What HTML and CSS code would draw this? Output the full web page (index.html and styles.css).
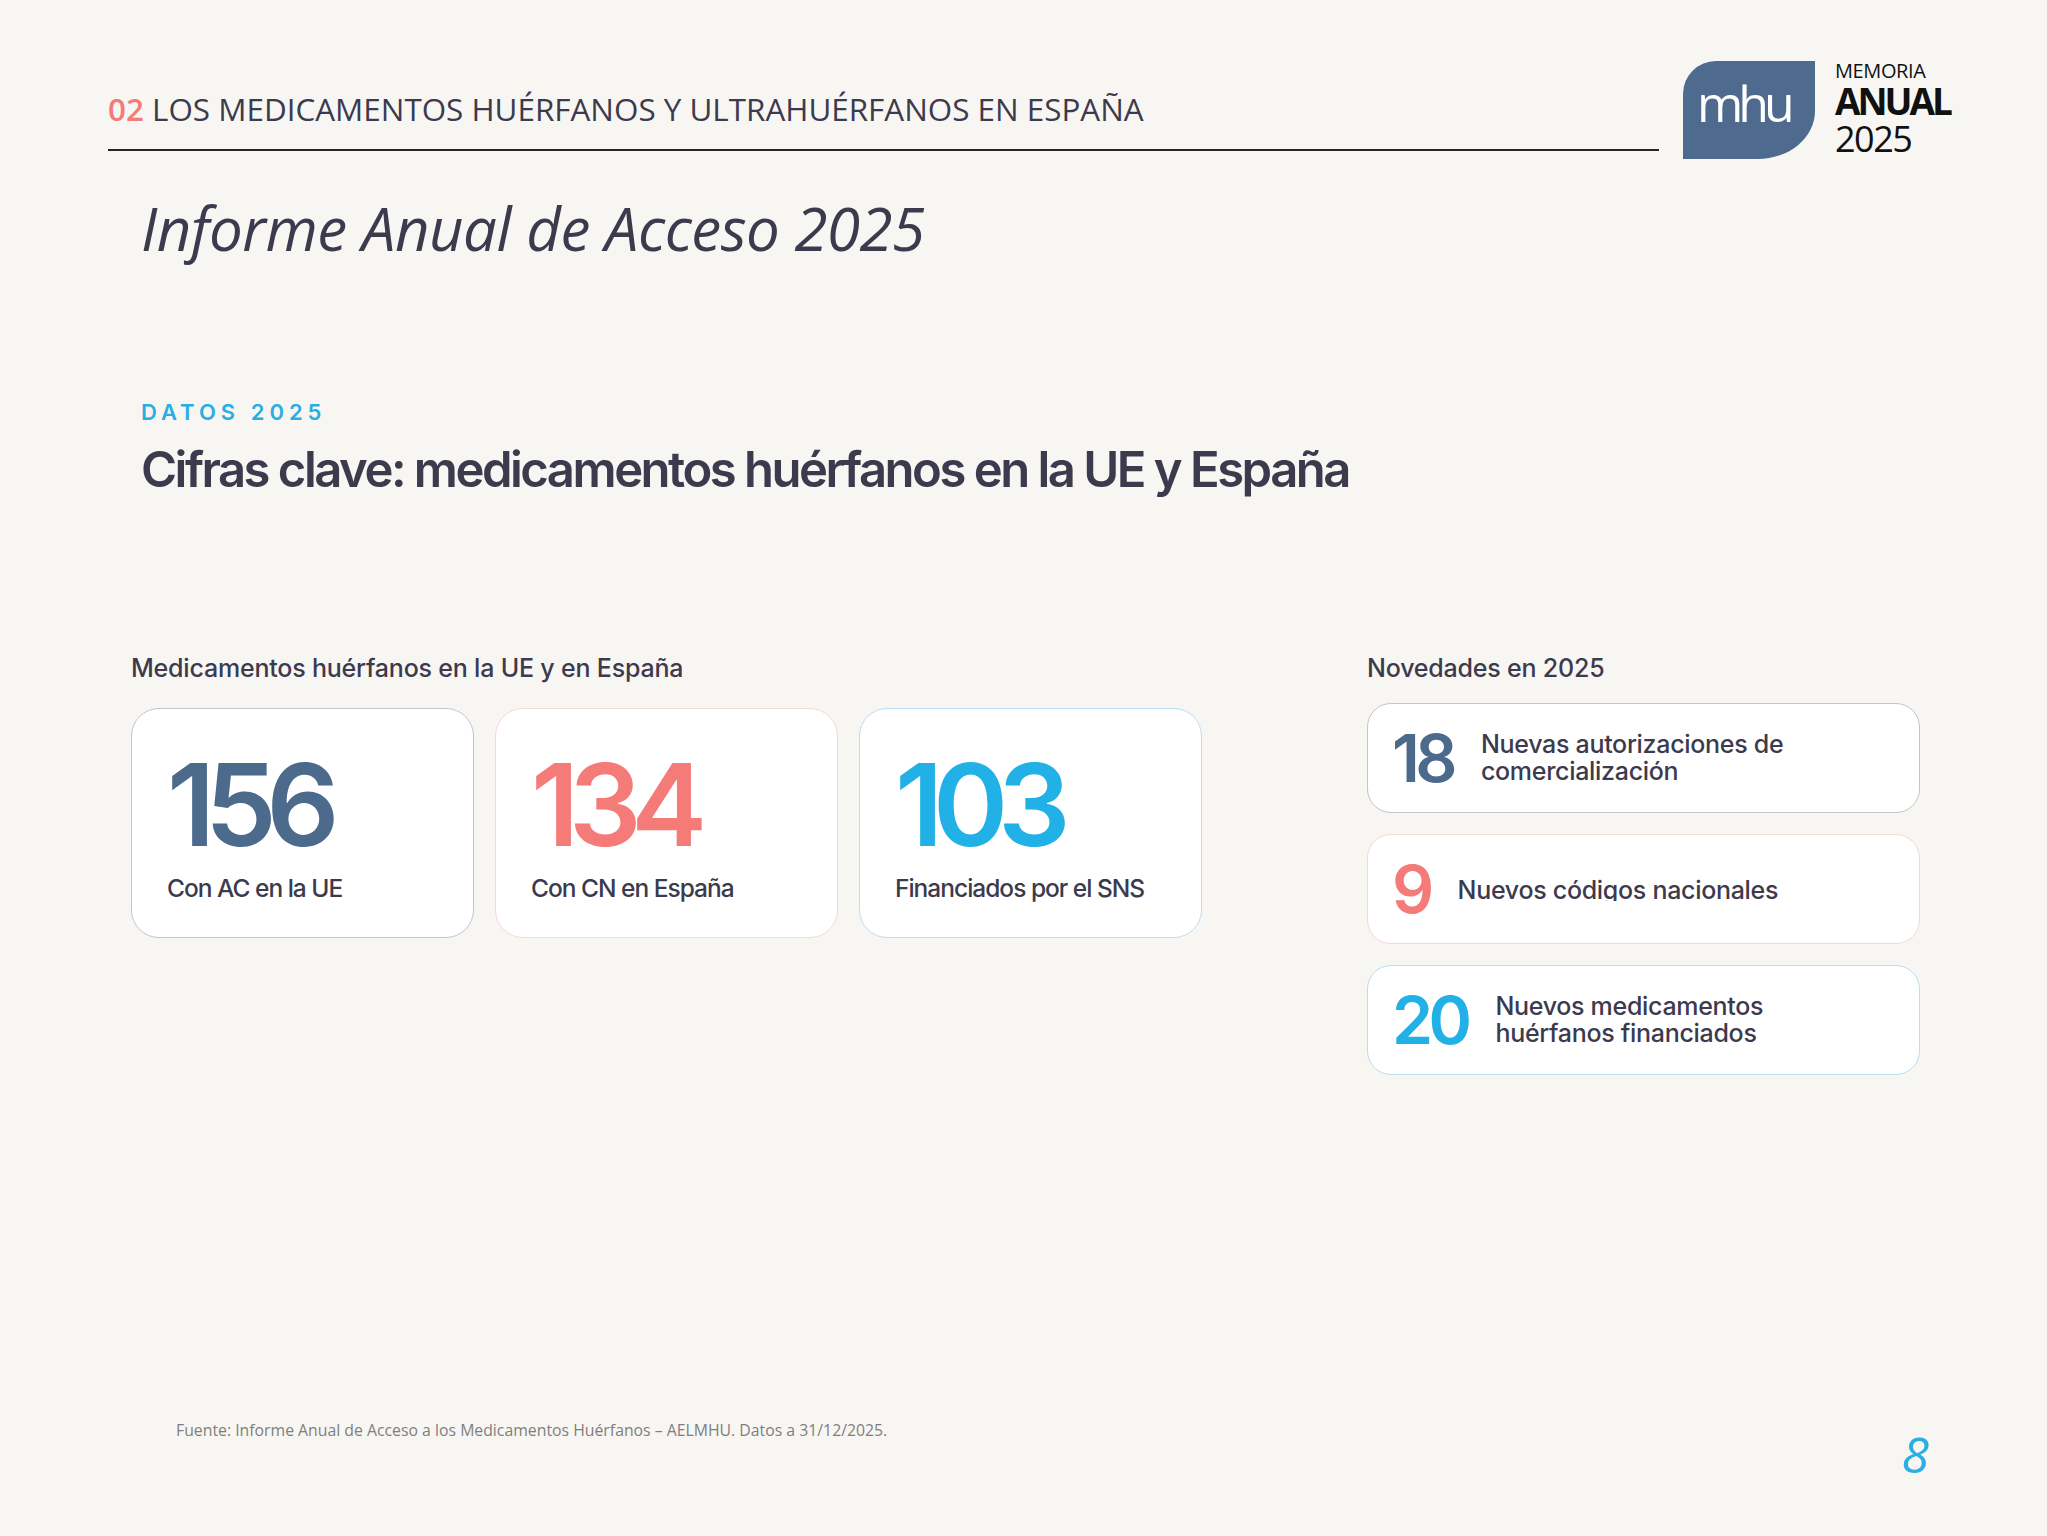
FILE: index.html
```html
<!DOCTYPE html>
<html lang="es">
<head>
<meta charset="utf-8">
<title>Memoria Anual 2025 – Cifras clave</title>
<link rel="stylesheet" href="styles.css">
</head>
<body>
<div class="page">
  <header class="top">
    <div class="top-left">
      <div class="section-title"><span class="num">02</span> LOS MEDICAMENTOS HUÉRFANOS Y ULTRAHUÉRFANOS EN ESPAÑA</div>
      <div class="rule"></div>
    </div>
    <div class="brand">
      <div class="logo-mark"><span>mhu</span></div>
      <div class="brand-text">
        <span class="memoria">MEMORIA</span>
        <span class="anual">ANUAL</span>
        <span class="year">2025</span>
      </div>
    </div>
  </header>

  <h1 class="report-title">Informe Anual de Acceso 2025</h1>

  <section class="intro">
    <div class="eyebrow">DATOS 2025</div>
    <h2 class="headline">Cifras clave: medicamentos huérfanos en la UE y España</h2>
  </section>

  <section class="stats">
    <div class="col-left">
      <h3 class="col-title">Medicamentos huérfanos en la UE y en España</h3>
      <div class="cards">
        <div class="card card-slate">
          <div class="card-num">156</div>
          <div class="card-label">Con AC en la UE</div>
        </div>
        <div class="card card-coral">
          <div class="card-num">134</div>
          <div class="card-label">Con CN en España</div>
        </div>
        <div class="card card-cyan">
          <div class="card-num">103</div>
          <div class="card-label">Financiados por el SNS</div>
        </div>
      </div>
    </div>
    <div class="col-right">
      <h3 class="col-title">Novedades en 2025</h3>
      <div class="rows">
        <div class="row row-slate">
          <div class="row-num">18</div>
          <div class="row-label">Nuevas autorizaciones de<br>comercialización</div>
        </div>
        <div class="row row-coral">
          <div class="row-num">9</div>
          <div class="row-label clip">Nuevos códigos nacionales</div>
        </div>
        <div class="row row-cyan">
          <div class="row-num">20</div>
          <div class="row-label">Nuevos medicamentos<br>huérfanos financiados</div>
        </div>
      </div>
    </div>
  </section>

  <footer class="footer">
    <p class="source">Fuente: Informe Anual de Acceso a los Medicamentos Huérfanos – AELMHU. Datos a 31/12/2025.</p>
    <span class="page-num">8</span>
  </footer>
</div>
</body>
</html>
```

FILE: styles.css
```css
* { box-sizing: border-box; }

html, body {
  margin: 0;
  padding: 0;
}

body {
  background: #f8f6f2;
  font-family: Inter, "Noto Sans", sans-serif;
  color: #3c3a4d;
}

.page {
  min-height: 100vh;
  display: flex;
  flex-direction: column;
}

/* ---------- header ---------- */
.top {
  display: flex;
  align-items: flex-start;
  gap: 24px;
  padding: 61px 0 0 108px;
}

.top-left {
  width: 1551px;
  padding-top: 28px;
}

.section-title {
  font-family: "Open Sans", sans-serif;
  font-size: 31.4px;
  line-height: 40px;
  color: #3c3a4d;
  white-space: nowrap;
}

.section-title .num {
  color: #f47b78;
  font-weight: 600;
}

.rule {
  margin-top: 20px;
  border-top: 2px solid #262626;
}

.brand {
  display: flex;
  align-items: flex-start;
  gap: 20px;
}

.logo-mark {
  width: 132px;
  height: 98px;
  background: #4e6a8e;
  border-radius: 33px 0 57px 0 / 33px 0 48px 0;
  padding: 17px 0 0 14px;
}

.logo-mark span {
  display: block;
  font-family: "Open Sans", sans-serif;
  font-size: 50px;
  line-height: 50px;
  font-weight: 400;
  letter-spacing: -5px;
  color: #ffffff;
}

.brand-text {
  display: flex;
  flex-direction: column;
  font-family: "Open Sans", sans-serif;
  color: #111111;
}

.memoria {
  font-size: 20px;
  line-height: 20px;
  letter-spacing: -0.4px;
}

.anual {
  margin-top: 2px;
  font-size: 37px;
  line-height: 36px;
  font-weight: 700;
  letter-spacing: -3px;
}

.year {
  margin-top: 2px;
  font-size: 36px;
  line-height: 36px;
  letter-spacing: -1.5px;
}

/* ---------- titles ---------- */
.report-title {
  margin: 35px 0 0 141px;
  font-family: "Open Sans", sans-serif;
  font-style: italic;
  font-weight: 400;
  font-size: 60px;
  line-height: 68px;
  letter-spacing: -0.5px;
  color: #3c3a4d;
}

.intro {
  margin: 137px 0 0 141px;
}

.eyebrow {
  font-size: 22px;
  line-height: 26px;
  font-weight: 600;
  letter-spacing: 5px;
  color: #29aee3;
}

.headline {
  margin: 16px 0 0;
  font-size: 49px;
  line-height: 58px;
  font-weight: 600;
  letter-spacing: -2.5px;
  color: #3c3a4d;
}

/* ---------- stats ---------- */
.stats {
  display: flex;
  align-items: flex-start;
  gap: 165px;
  margin-top: 154px;
  padding-left: 131px;
}

.col-left { width: 1071px; }
.col-right { width: 553px; }

.col-title {
  margin: 0;
  font-size: 25px;
  line-height: 30px;
  font-weight: 500;
  letter-spacing: -0.2px;
  color: #3c3a4d;
}

.cards {
  display: grid;
  grid-template-columns: repeat(3, 1fr);
  gap: 21px;
  margin-top: 25px;
}

.card {
  height: 230px;
  background: #ffffff;
  border: 1.5px solid #c9c6d3;
  border-radius: 28px;
  padding: 39px 0 0 35px;
}

.card-num {
  font-size: 114px;
  line-height: 114px;
  font-weight: 600;
  letter-spacing: -0.09em;
}

.card-label {
  margin-top: 11px;
  font-size: 24.5px;
  line-height: 30px;
  font-weight: 500;
  letter-spacing: -1px;
  color: #3c3a4d;
}

.rows {
  display: flex;
  flex-direction: column;
  gap: 21px;
  margin-top: 20px;
}

.row {
  height: 110px;
  display: flex;
  align-items: center;
  gap: 28px;
  padding-left: 24px;
  background: #ffffff;
  border: 1.5px solid #c9c6d3;
  border-radius: 24px;
}

.row-num {
  font-size: 66px;
  line-height: 66px;
  font-weight: 600;
  letter-spacing: -0.07em;
}

.row-label {
  font-size: 25px;
  line-height: 27px;
  font-weight: 500;
  letter-spacing: -0.3px;
  color: #3c3a4d;
}

.row-label.clip {
  height: 24px;
  overflow: hidden;
}

.card-slate, .row-slate { border-color: #c6c2d0; }
.card-coral, .row-coral { border-color: #f3dad6; }
.card-cyan, .row-cyan { border-color: #b7dff0; }

.card-slate .card-num, .row-slate .row-num { color: #4b6a8c; }
.card-coral .card-num, .row-coral .row-num { color: #f47b78; }
.card-cyan .card-num, .row-cyan .row-num { color: #22b1e6; }

/* ---------- footer ---------- */
.footer {
  margin-top: auto;
  display: flex;
  justify-content: space-between;
  align-items: flex-start;
  padding: 0 118px 57px 176px;
}

.source {
  margin: 0;
  font-family: "Open Sans", sans-serif;
  font-size: 15.8px;
  line-height: 20px;
  color: #7f7f7f;
}

.page-num {
  margin-top: 9px;
  font-family: "Open Sans", sans-serif;
  font-style: italic;
  font-size: 50px;
  line-height: 50px;
  color: #2aaee3;
}
```
